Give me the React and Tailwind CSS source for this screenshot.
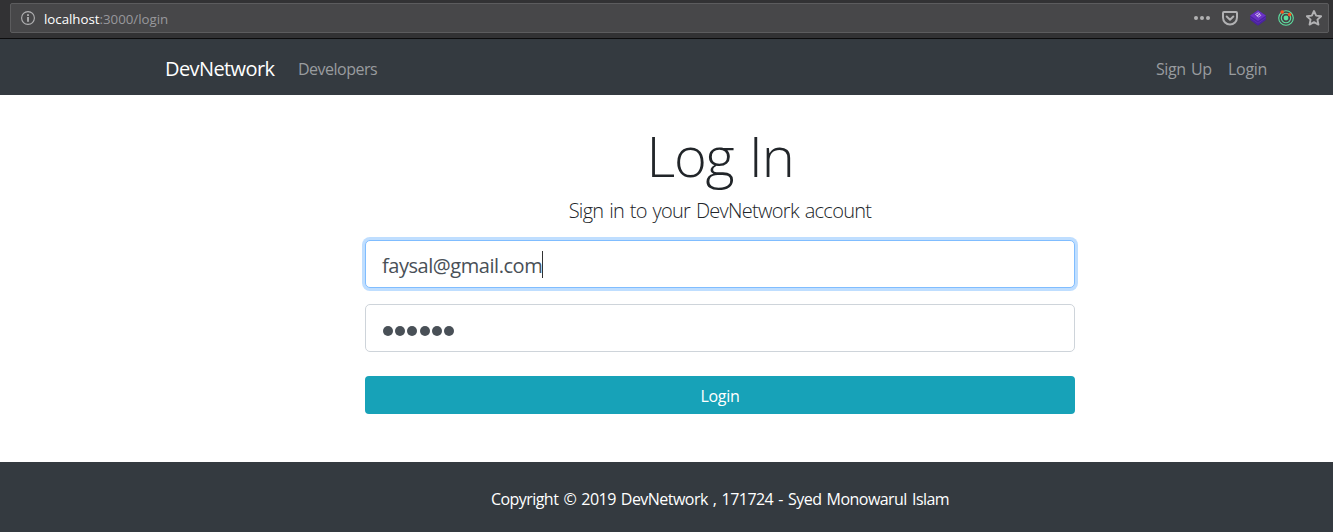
import React from "react";

function InfoIcon() {
  return (
    <svg width="16" height="16" viewBox="0 0 16 16" className="ml-[9px] shrink-0">
      <circle cx="8" cy="8" r="6.4" fill="none" stroke="#b1b1b3" strokeWidth="1.1" />
      <rect x="7.1" y="4.2" width="1.8" height="1.8" fill="#b1b1b3" />
      <rect x="7.1" y="7" width="1.8" height="4.8" fill="#b1b1b3" />
    </svg>
  );
}

function AddressIcons() {
  return (
    <div className="ml-auto flex items-center gap-3 pr-1.5">
      <svg width="16" height="16" viewBox="0 0 16 16" fill="#b1b1b3">
        <circle cx="2" cy="8" r="2" />
        <circle cx="8" cy="8" r="2" />
        <circle cx="14" cy="8" r="2" />
      </svg>
      <svg width="16" height="16" viewBox="0 0 16 16" fill="none" stroke="#b1b1b3" strokeWidth="2" strokeLinecap="round" strokeLinejoin="round">
        <path d="M2 2h12a1 1 0 0 1 1 1v4.500a7 7 0 0 1-14 0V3a1 1 0 0 1 1-1z" />
        <path d="M4.700 6.500L8 9.700l3.300-3.200" />
      </svg>
      <svg width="16" height="16" viewBox="0 0 16 16">
        <path d="M8 0.200L15.800 5.500v4.500L8 15.800L0.200 10V5.500z" fill="#4a22a0" />
        <path d="M8 0.200L15.800 5.500L8 11L0.200 5.500z" fill="#6a32c4" />
        <path d="M0.200 7.700L8 13.200l7.800-5.500" fill="none" stroke="#6330b8" strokeWidth="0.800" />
        <path d="M5.500 4.500l3-1.800 1.300 1.300-3 1.800zM7 5.900l2.800-1.700 1 1.300-2.500 1.500z" fill="none" stroke="#e6d8fa" strokeWidth="0.700" />
      </svg>
      <svg width="16" height="16" viewBox="0 0 16 16" fill="none" stroke="#5ee0a0">
        <circle cx="8" cy="8" r="7.300" strokeWidth="1.100" />
        <circle cx="8" cy="8" r="4.700" strokeWidth="1.100" />
        <circle cx="8" cy="8" r="2.400" fill="#5ee0a0" stroke="none" />
        <circle cx="4.200" cy="2" r="1.800" fill="#ff5722" stroke="none" />
        <circle cx="11.600" cy="4.600" r="1.800" fill="#ff5722" stroke="none" />
      </svg>
      <svg width="16" height="16" viewBox="0 0 16 16" fill="none" stroke="#b1b1b3" strokeWidth="1.900" strokeLinejoin="round">
        <path d="M8 1l2.150 4.600 5 .6-3.700 3.450 1 4.950L8 12.150l-4.450 2.450 1-4.950-3.700-3.450 5-.6z" />
      </svg>
    </div>
  );
}

function AddressBar() {
  return (
    <div className="h-[39px] border-b border-[#0c0c0d] bg-[#323234] pt-[3px] pr-1 pl-2.5">
      <div className="flex h-[30px] items-center rounded-[2px] border border-[#5c5c5e] bg-[#474749]">
        <InfoIcon />
        <span className="ml-2 pt-[3px] text-[13.300px] tracking-[-0.020px] text-[#98989c]">
          <span className="text-white">localhost</span>:3000/login
        </span>
        <AddressIcons />
      </div>
    </div>
  );
}

function Navbar() {
  return (
    <nav className="h-14 w-[1440px] bg-[#343a40]">
      <div className="mx-auto flex h-full w-[1110px] items-center pt-[3px] text-base text-[#999c9f]">
        <a className="w-[133px] text-[20px] tracking-[-0.6px] text-white">DevNetwork</a>
        <a className="tracking-[-0.5px]">Developers</a>
        <a className="ml-auto w-[72px] tracking-[-0.4px] [word-spacing:1.500px]">Sign Up</a>
        <a className="w-[47px] tracking-[-0.3px]">Login</a>
      </div>
    </nav>
  );
}

function LoginForm() {
  return (
    <main className="h-[367px] w-[1440px] pt-6 text-[#212529]">
      <div className="mx-auto flex w-[710px] flex-col">
        <h1 className="mt-[3px] h-[67px] text-center text-[56px] leading-[67px] font-light tracking-[-1.200px] [word-spacing:2px]">Log In</h1>
        <p className="mt-[7px] h-[30px] text-center text-[20px] leading-[30px] font-light tracking-[-0.700px] [word-spacing:1.200px]">
          Sign in to your DevNetwork account
        </p>
        <div className="mt-[14px] flex h-12 items-center rounded-[5px] border border-[#80bdff] bg-white px-4 text-[20px] text-[#495057] shadow-[0_0_0_3px_#bfdeff]">
          <span className="mt-1 tracking-[-0.450px]">faysal@gmail.com</span>
          <span className="h-[27px] w-px bg-[#333]" />
        </div>
        <div className="mt-4 flex h-12 items-center gap-[2.200px] rounded-[5px] border border-[#ced4da] bg-white px-[17px] pt-1.5">
          {[0, 1, 2, 3, 4, 5].map((i) => (
            <span key={i} className="size-2.5 rounded-full bg-[#495057]" />
          ))}
        </div>
        <button className="mt-6 h-[38px] rounded-[4px] bg-[#17a2b8] pt-px text-base tracking-[-0.3px] text-white">Login</button>
      </div>
    </main>
  );
}

export default function App() {
  return (
    <div className="h-[532px] w-[1333px] overflow-hidden bg-white font-['Open_Sans','Noto_Sans',sans-serif]">
      <AddressBar />
      <Navbar />
      <LoginForm />
      <footer className="flex h-[70px] w-[1440px] items-center justify-center bg-[#343a40] pt-1 text-base tracking-[-0.540px] text-white [word-spacing:1.500px]">
        Copyright © 2019 DevNetwork , 171724 - Syed Monowarul Islam
      </footer>
    </div>
  );
}
